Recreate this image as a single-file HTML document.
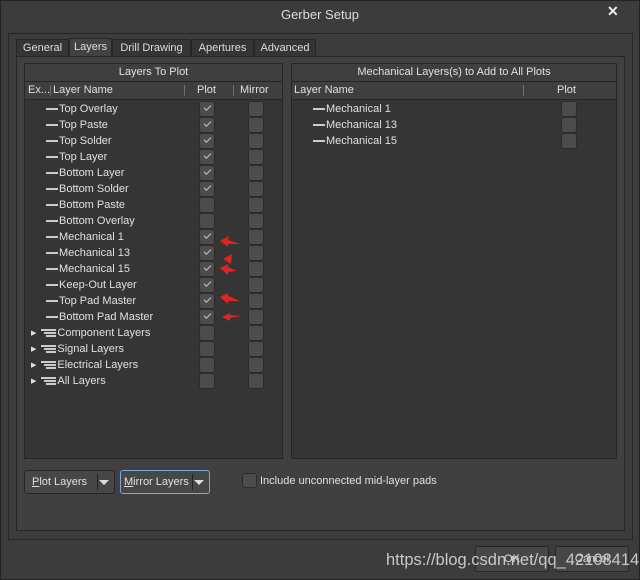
<!DOCTYPE html><html><head><style>
body{margin:0;width:640px;height:580px;background:#404040;font-family:"Liberation Sans",sans-serif;font-size:11px;color:#e0e0e0;position:relative;overflow:hidden}
.a{position:absolute}
.win{left:0;top:0;width:638px;height:578px;border:1px solid #222;background:#3c3c3c}
.tab{top:39px;height:17px;background:#353535;border:1px solid #262626;border-bottom:none;line-height:16px;text-align:center;color:#ddd;border-radius:2px 2px 0 0}
.panel{border:1px solid #262626;background:#353535}
.hd{background:#3f3f3f;border-bottom:1px solid #262626;height:17px;line-height:17px}
.cb{width:14px;height:14px;background:#4c4c4c;border:1px solid #2b2b2b;border-radius:3px}
.cb.k::after{content:"";position:absolute;left:4px;top:3px;width:6px;height:3px;border-left:1px solid #ccc;border-bottom:1px solid #ccc;transform:rotate(-45deg)}
.row{height:16px;line-height:16px}
.ln{display:inline-block;width:12px;height:2px;background:#ccc;vertical-align:middle;margin-right:1px}
.btn{background:#474747;border:1px solid #262626;border-radius:3px;height:22px;line-height:22px}
.arr{width:0;height:0;border-left:7px solid transparent;border-right:7px solid transparent}
.gi{display:inline-block;width:15px;vertical-align:middle;margin-right:1px}
.gi b{display:block;height:2px;background:#ccc;margin-bottom:1px}
</style></head><body>
<div class="a win"></div>
<div class="a" style="left:0;top:7px;width:640px;text-align:center;font-size:13px;color:#ddd">Gerber Setup</div>
<div class="a" style="left:607px;top:3px;font-size:14px;color:#eee;font-weight:bold">✕</div>
<div class="a" style="left:8px;top:33px;width:623px;height:505px;border:1px solid #262626"></div>
<div class="a tab" style="left:16px;width:51px">General</div>
<div class="a tab" style="left:69px;width:41px;background:#424242;top:38px;height:19px">Layers</div>
<div class="a tab" style="left:112px;width:77px">Drill Drawing</div>
<div class="a tab" style="left:191px;width:61px">Apertures</div>
<div class="a tab" style="left:254px;width:60px">Advanced</div>
<div class="a" style="left:16px;top:56px;width:607px;height:473px;border:1px solid #262626;background:#404040"></div>
<div class="a panel" style="left:24px;top:63px;width:257px;height:394px">
<div class="hd" style="text-align:center">Layers To Plot</div>
<div class="hd" style="position:relative"><span class="a" style="left:3px">Ex...</span><span class="a" style="left:24px;color:#777">|</span><span class="a" style="left:28px">Layer Name</span><span class="a" style="left:158px;color:#777">|</span><span class="a" style="left:172px">Plot</span><span class="a" style="left:207px;color:#777">|</span><span class="a" style="left:215px">Mirror</span></div>
</div>
<div class="a panel" style="left:291px;top:63px;width:324px;height:394px">
<div class="hd" style="text-align:center">Mechanical Layers(s) to Add to All Plots</div>
<div class="hd" style="position:relative"><span class="a" style="left:2px">Layer Name</span><span class="a" style="left:230px;color:#777">|</span><span class="a" style="left:265px">Plot</span></div>
</div>
<script>
var L=[["Top Overlay",1],["Top Paste",1],["Top Solder",1],["Top Layer",1],["Bottom Layer",1],["Bottom Solder",1],["Bottom Paste",0],["Bottom Overlay",0],["Mechanical 1",1],["Mechanical 13",1],["Mechanical 15",1],["Keep-Out Layer",1],["Top Pad Master",1],["Bottom Pad Master",1],["Component Layers",0,1],["Signal Layers",0,1],["Electrical Layers",0,1],["All Layers",0,1]];
var h="";L.forEach(function(r,i){var y=101+i*16;
h+='<div class="a row" style="left:'+(r[2]?31:46)+'px;top:'+y+'px">'+(r[2]?'<span style="font-size:7px;margin-right:5px;vertical-align:1px">▶</span><span class="gi"><b></b><b style="margin-left:3px"></b><b style="margin-left:5px"></b></span>':'<span class="ln"></span>')+r[0]+'</div>';
h+='<div class="a cb'+(r[1]?' k':'')+'" style="left:199px;top:'+y+'px"></div><div class="a cb" style="left:248px;top:'+y+'px"></div>';});
["Mechanical 1","Mechanical 13","Mechanical 15"].forEach(function(n,i){var y=101+i*16;h+='<div class="a row" style="left:313px;top:'+y+'px"><span class="ln"></span>'+n+'</div><div class="a cb" style="left:561px;top:'+y+'px"></div>';});
document.write(h);
</script>
<svg class="a" style="left:215px;top:235px" width="30" height="90"><g fill="#e52222"><polygon points="5,6 14,1 13,5 25,9 13,9 13,12"/><polygon points="8,24 17,19 16,29"/><polygon points="5,33 13,29 13,32 22,36 13,37 13,40"/><polygon points="5,62 13,58 13,61 25,66 13,66 13,69"/><polygon points="7,82 15,78 15,80 26,81 15,83 15,86"/></g></svg>
<div class="a btn" style="left:24px;top:470px;width:89px"><span style="margin-left:7px"><u>P</u>lot Layers</span><span class="a" style="left:72px;top:3px;height:16px;border-left:1px solid #222"></span><span class="a arr" style="left:74px;top:9px;border-top:5px solid #ddd;border-left-width:5px;border-right-width:5px"></span></div>
<div class="a btn" style="left:120px;top:470px;width:88px;border-color:#7aa7d6"><span style="margin-left:3px"><u>M</u>irror Layers</span><span class="a" style="left:71px;top:3px;height:16px;border-left:1px solid #222"></span><span class="a arr" style="left:73px;top:9px;border-top:5px solid #ddd;border-left-width:5px;border-right-width:5px"></span></div>
<div class="a cb" style="left:242px;top:473px;width:13px;height:13px"></div>
<div class="a" style="left:260px;top:475px">Include unconnected mid-layer pads</div>
<div class="a btn" style="left:475px;top:546px;width:72px;text-align:center;height:24px;line-height:24px">OK</div>
<div class="a btn" style="left:555px;top:546px;width:72px;text-align:center;height:24px;line-height:24px">Cancel</div>
<div class="a" style="left:386px;top:551px;font-size:16.5px;color:#c8c8c8;font-family:'Liberation Sans',sans-serif">https://blog.csdn.net/qq_42108414</div>
</body></html>
